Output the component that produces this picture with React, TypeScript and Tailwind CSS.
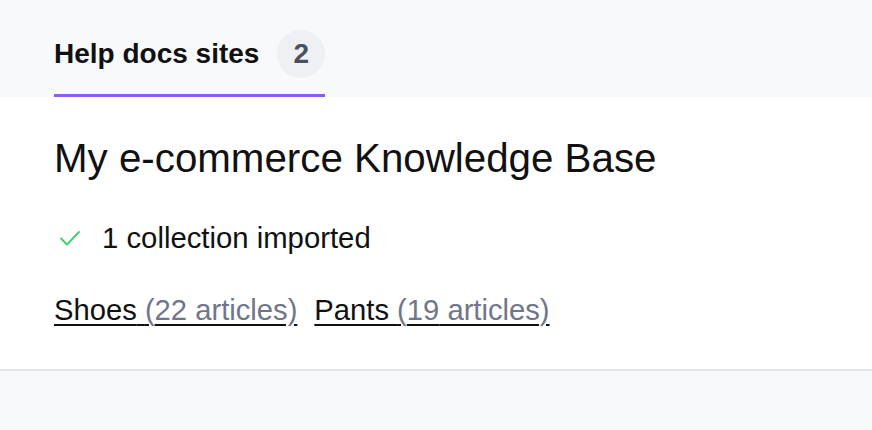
export default function App() {
  const collections = [
    { name: "Shoes", count: 22 },
    { name: "Pants", count: 19 },
  ];

  return (
    <div className="min-h-[430px] w-[872px] bg-[#f8f9fb] font-['Liberation_Sans',Arial,sans-serif]">
      {/* Tabs */}
      <div className="flex px-[54px] pt-[30px]">
        <div className="flex flex-col">
          <div className="flex h-[48px] items-center gap-[18px]">
            <span className="text-[28px] leading-[32px] font-bold text-[#111]">Help docs sites</span>
            <span className="flex h-[48px] w-[48px] items-center justify-center rounded-full bg-[#eff0f3] text-[28px] font-bold text-[#4b5060]">
              2
            </span>
          </div>
          <div className="mt-[16px] h-[3px] bg-[#8b5cf6]" />
        </div>
      </div>

      {/* Content */}
      <div className="border-b-2 border-[#e4e4ea] bg-white px-[54px] pb-[41px] pt-[38px]">
        <h1 className="text-[40.3px] leading-[48px] font-normal text-[#111]">My e-commerce Knowledge Base</h1>

        <div className="mt-[37px] flex h-[36px] items-center gap-[20px] pl-[4px]">
          <svg width="24" height="24" viewBox="0 0 24 24" fill="none" stroke="#4ccf6b" strokeWidth="2" strokeLinecap="round" strokeLinejoin="round">
            <path d="M3 12.5l6 6L21 6" />
          </svg>
          <span className="text-[29.3px] leading-[36px] text-[#111]">1 collection imported</span>
        </div>

        <div className="mt-[36px] flex gap-[17px] text-[29.2px] leading-[36px]">
          {collections.map((c) => (
            <a key={c.name} href="#" className="text-[#111] underline underline-offset-[4px] decoration-[2px]">
              {c.name} <span className="text-[#70768a]">({c.count} articles)</span>
            </a>
          ))}
        </div>
      </div>
    </div>
  );
}
